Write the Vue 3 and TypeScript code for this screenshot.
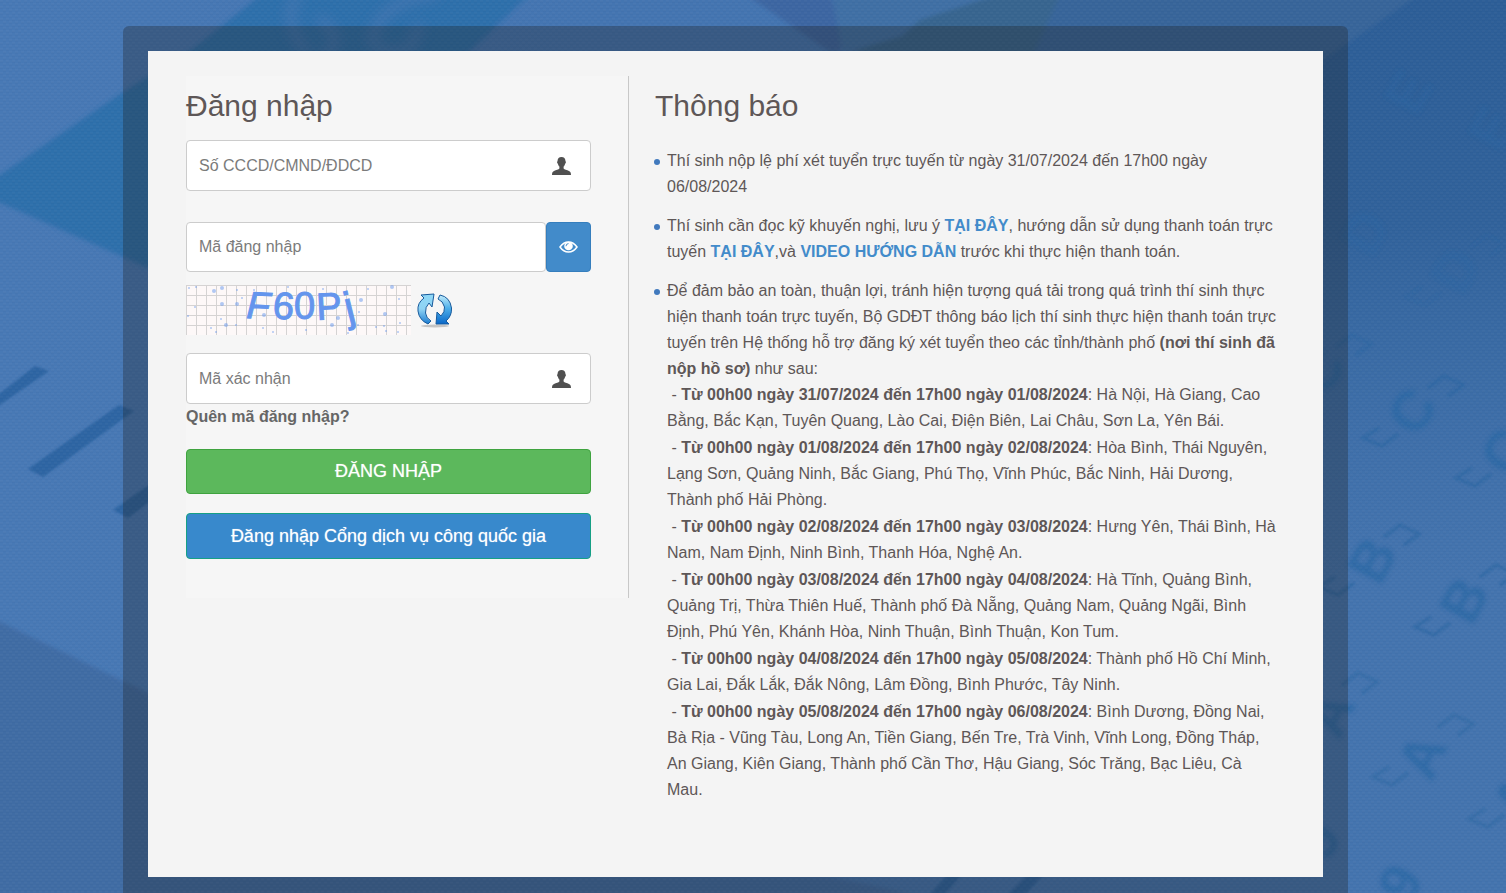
<script setup lang="ts">
import { ref } from 'vue'

interface Slot {
  time: string
  places: string
}

const citizenId = ref('')
const loginCode = ref('')
const captcha = ref('')
const showCode = ref(false)

const slots: Slot[] = [
  { time: 'Từ 00h00 ngày 31/07/2024 đến 17h00 ngày 01/08/2024', places: 'Hà Nội, Hà Giang, Cao Bằng, Bắc Kạn, Tuyên Quang, Lào Cai, Điện Biên, Lai Châu, Sơn La, Yên Bái.' },
  { time: 'Từ 00h00 ngày 01/08/2024 đến 17h00 ngày 02/08/2024', places: 'Hòa Bình, Thái Nguyên, Lạng Sơn, Quảng Ninh, Bắc Giang, Phú Thọ, Vĩnh Phúc, Bắc Ninh, Hải Dương, Thành phố Hải Phòng.' },
  { time: 'Từ 00h00 ngày 02/08/2024 đến 17h00 ngày 03/08/2024', places: 'Hưng Yên, Thái Bình, Hà Nam, Nam Định, Ninh Bình, Thanh Hóa, Nghệ An.' },
  { time: 'Từ 00h00 ngày 03/08/2024 đến 17h00 ngày 04/08/2024', places: 'Hà Tĩnh, Quảng Bình, Quảng Trị, Thừa Thiên Huế, Thành phố Đà Nẵng, Quảng Nam, Quảng Ngãi, Bình Định, Phú Yên, Khánh Hòa, Ninh Thuận, Bình Thuận, Kon Tum.' },
  { time: 'Từ 00h00 ngày 04/08/2024 đến 17h00 ngày 05/08/2024', places: 'Thành phố Hồ Chí Minh, Gia Lai, Đắk Lắk, Đắk Nông, Lâm Đồng, Bình Phước, Tây Ninh.' },
  { time: 'Từ 00h00 ngày 05/08/2024 đến 17h00 ngày 06/08/2024', places: 'Bình Dương, Đồng Nai, Bà Rịa - Vũng Tàu, Long An, Tiền Giang, Bến Tre, Trà Vinh, Vĩnh Long, Đồng Tháp, An Giang, Kiên Giang, Thành phố Cần Thơ, Hậu Giang, Sóc Trăng, Bạc Liêu, Cà Mau.' },
]

// Specks scattered over the captcha grid: x, y, radius
const specks: number[][] = [
  [3, 3, 1], [10, 2, 1], [28, 6, 2], [36, 3, 2], [51, 5, 1], [9, 22, 1], [2, 31, 1], [36, 19, 2],
  [51, 19, 2], [35, 34, 1], [25, 43, 1], [40, 40, 2], [30, 47, 1], [50, 40, 1], [56, 13, 1], [68, 5, 1],
  [87, 47, 1], [78, 30, 2], [120, 45, 1], [137, 4, 1], [146, 40, 2], [152, 33, 2], [175, 15, 2],
  [182, 4, 1], [173, 27, 1], [172, 40, 1], [190, 42, 1], [199, 29, 2], [200, 46, 1], [206, 2, 2],
  [213, 14, 1], [214, 38, 1], [198, 41, 1], [162, 48, 1], [212, 47, 1], [102, 2, 1], [77, 43, 1],
]

// Ghost bracket pairs printed on the background: centre x, centre y, strength
const brackets: number[][] = [
  [1412, 411, 0.8], [1505, 451, 0.8], [1368, 560, 0.8], [1464, 600, 0.8], [1422, 750, 0.6],
  [1326, 708, 0.6], [1518, 792, 0.6], [1455, 270, 0.35], [1320, 370, 0.7],
]
</script>

<template>
  <div class="page">
    <svg class="backdrop" viewBox="0 0 1506 893" preserveAspectRatio="xMidYMid slice" aria-hidden="true">
      <defs>
        <linearGradient id="base" x1="0" y1="0" x2="1" y2="0">
          <stop offset="0" stop-color="#4879b5" />
          <stop offset="0.4" stop-color="#4475b1" />
          <stop offset="1" stop-color="#4474ae" />
        </linearGradient>
        <linearGradient id="shade" x1="0" y1="0" x2="0" y2="1">
          <stop offset="0" stop-color="#2d5e97" />
          <stop offset="0.25" stop-color="#2f6099" stop-opacity="0.9" />
          <stop offset="0.65" stop-color="#3a6ba5" stop-opacity="0" />
        </linearGradient>
        <pattern id="weave" width="6" height="6" patternUnits="userSpaceOnUse">
          <path d="M0 1h3M3 4h3" stroke="#fff" stroke-opacity="0.05" />
          <path d="M0 2h3M3 5h3" stroke="#00183a" stroke-opacity="0.05" />
        </pattern>
        <filter id="crisp"><feGaussianBlur stdDeviation="1.200" /></filter>
        <filter id="soft"><feGaussianBlur stdDeviation="2" /></filter>
        <filter id="softer" x="-20%" y="-50%" width="140%" height="200%"><feGaussianBlur stdDeviation="6" /></filter>
      </defs>
      <rect width="1506" height="893" fill="url(#base)" />
      <path d="M1100 0H1506V893H1100Z" fill="url(#shade)" />
      <g filter="url(#soft)">
        <path d="M-6 179L123 92L190 51L262 -6H530L470 51L148 268L-6 200Z" fill="#2f6fab" />
        <path d="M-6 620L0 622L123 681L300 765L940 900H-6Z" fill="#416ca4" />
      </g>
      <g filter="url(#crisp)" fill="#2f65a3">
        <path d="M-6 398L35 366L49 371L-6 409Z" />
        <path d="M28 469L119 405L134 411L43 477Z" />
        <path d="M113 510L170 470L184 476L128 518Z" />
        <path d="M925 900L950 872H964L940 900Z" />
        <path d="M1003 900L1030 872H1046L1020 900Z" />
      </g>
      <g filter="url(#softer)" fill="none" stroke="#4677b2" stroke-width="11" opacity="0.7">
        <path d="M298 -6Q280 20 308 55M318 18Q350 40 320 60" />
        <path d="M438 -6Q380 0 372 40Q380 58 410 50L420 24" />
      </g>
      <g filter="url(#soft)">
        <path d="M745 -6L830 52H840L842 30L830 -6Z" fill="#3c66a2" />
        <path d="M832 -6L842 52H930L1000 -6Z" fill="#4170a5" />
        <path d="M850 52L902 36L920 20L1000 -6H1075L1045 60Z" fill="#38658f" />
        <path d="M1060 -6H1420L1320 62H1030Z" fill="#38659a" />
      </g>
      <g class="ghost" filter="url(#soft)">
        <text x="1412" y="411" transform="rotate(-55 1412 411)">C</text>
        <text x="1505" y="451" transform="rotate(-55 1505 451)">C</text>
        <text x="1320" y="370" transform="rotate(-55 1320 370)">C</text>
        <text x="1372" y="560" transform="rotate(-62 1372 560)">B</text>
        <text x="1464" y="600" transform="rotate(-62 1464 600)">B</text>
        <text x="1422" y="756" transform="rotate(-65 1422 756)">A</text>
        <text x="1330" y="714" transform="rotate(-65 1330 714)">A</text>
        <text x="1516" y="796" transform="rotate(-65 1516 796)">A</text>
        <text x="1400" y="883" transform="rotate(-62 1400 883)">9</text>
        <text x="1318" y="840" transform="rotate(-62 1318 840)">9</text>
        <text class="faint" x="1455" y="270" transform="rotate(-62 1455 270)">D</text>
        <text class="faint" x="1365" y="232" transform="rotate(-62 1365 232)">D</text>
        <text class="faint" x="1408" y="92" transform="rotate(-62 1408 92)">E</text>
        <text class="faint" x="1492" y="128" transform="rotate(-62 1492 128)">E</text>
      </g>
      <g filter="url(#crisp)" fill="none" stroke="#2c67a2" stroke-width="3" opacity="0.8">
        <path
          v-for="(b, i) in brackets"
          :key="i"
          :opacity="b[2]"
          :transform="`translate(${b[0]} ${b[1]})`"
          d="M-33 17L-49 27L-30 35L-14 23M16 -23L32 -35L51 -26L36 -15"
        />
      </g>
      <rect width="1506" height="893" fill="url(#weave)" />
    </svg>

    <main class="frame">
      <div class="panel">
        <form class="login" @submit.prevent>
          <h2>Đăng nhập</h2>
          <div class="field">
            <input v-model="citizenId" type="text" placeholder="Số CCCD/CMND/ĐDCD" aria-label="Số CCCD/CMND/ĐDCD" />
            <svg class="user" viewBox="0 0 19 18" aria-hidden="true">
              <path d="M9.500 0C12 0 13.500 1.500 13.500 4.200C14.300 4.500 13.900 6.300 13.100 6.700C12.800 8.200 12.200 9 11.600 9.600V11.600C12.300 12.800 15 13 17 13.900C18.700 14.700 19 16 19 18H0C0 16 .3 14.700 2 13.900C4 13 6.700 12.800 7.400 11.600V9.600C6.800 9 6.200 8.200 5.900 6.700C5.100 6.300 4.700 4.500 5.500 4.200C5.500 1.500 7 0 9.500 0Z" />
            </svg>
          </div>
          <div class="code-row">
            <input v-model="loginCode" :type="showCode ? 'text' : 'password'" placeholder="Mã đăng nhập" aria-label="Mã đăng nhập" />
            <button class="eye" type="button" aria-label="Hiện mã đăng nhập" @click="showCode = !showCode">
              <svg viewBox="0 0 19 12" aria-hidden="true">
                <path d="M1 6Q4.500 1 9.500 1T18 6Q14.500 11 9.500 11T1 6Z" fill="none" stroke="#fff" stroke-width="1.500" />
                <circle cx="9.500" cy="5" r="4.300" fill="#fff" />
                <path d="M7 5.200A2.600 2.600 0 0 1 9.500 2.600" fill="none" stroke="#428bca" stroke-width="1" />
              </svg>
            </button>
          </div>
          <div class="captcha-row">
            <svg class="captcha" viewBox="0 0 225 50" role="img" aria-label="Mã xác nhận F60Pj">
              <defs>
                <pattern id="grid" width="10" height="10" patternUnits="userSpaceOnUse">
                  <path d="M0 0.500H10M0.500 0V10" stroke="#d5d3d3" fill="none" />
                </pattern>
              </defs>
              <rect width="225" height="50" fill="#fdf8f8" />
              <rect width="225" height="50" fill="url(#grid)" />
              <circle v-for="(s, i) in specks" :key="i" :cx="s[0]" :cy="s[1]" :r="s[2]" fill="#6495ed" :opacity="s[2] > 1 ? 0.5 : 0.5" />
              <g class="glyphs">
                <text class="slant" x="60" y="33" transform="rotate(3 60 33)">F</text>
                <text x="86" y="33" transform="rotate(5 86 33)">6</text>
                <text x="108" y="34">0</text>
                <text x="131" y="35" transform="rotate(-3 131 35)">P</text>
                <text class="tall" x="162" y="37" transform="rotate(-14 162 37)">j</text>
              </g>
            </svg>
            <button class="refresh" type="button" aria-label="Đổi mã xác nhận">
              <svg viewBox="0 0 36 36" aria-hidden="true">
                <defs>
                  <linearGradient id="sky" x1="0" y1="0" x2="0" y2="1">
                    <stop offset="0" stop-color="#8fd8f7" />
                    <stop offset="0.5" stop-color="#8fd3f4" />
                    <stop offset="1" stop-color="#1b7bd0" />
                  </linearGradient>
                  <linearGradient id="deep" x1="0" y1="0" x2="0" y2="1">
                    <stop offset="0" stop-color="#c5edfb" />
                    <stop offset="0.45" stop-color="#4fb0ea" />
                    <stop offset="1" stop-color="#0967c8" />
                  </linearGradient>
                </defs>
                <ellipse cx="18" cy="34" rx="14" ry="1.500" fill="#000" opacity="0.2" />
                <path d="M4 3L17 2L15 15L12 11Q8 15 8.500 21Q9 26 14 29L11 32Q2 28 1 19Q0 11 7 6Z" fill="url(#sky)" stroke="#175a9c" stroke-linejoin="round" />
                <path d="M32 32H19L20 20L24 24Q28 20 27.500 15Q26 9 21 7L23 3Q33 5 34.500 16Q35 24 29 29Z" fill="url(#deep)" stroke="#175a9c" stroke-linejoin="round" />
              </svg>
            </button>
          </div>
          <div class="field">
            <input v-model="captcha" type="text" placeholder="Mã xác nhận" aria-label="Mã xác nhận" />
            <svg class="user" viewBox="0 0 19 18" aria-hidden="true">
              <path d="M9.500 0C12 0 13.500 1.500 13.500 4.200C14.300 4.500 13.900 6.300 13.100 6.700C12.800 8.200 12.200 9 11.600 9.600V11.600C12.300 12.800 15 13 17 13.900C18.700 14.700 19 16 19 18H0C0 16 .3 14.700 2 13.900C4 13 6.700 12.800 7.400 11.600V9.600C6.800 9 6.200 8.200 5.900 6.700C5.100 6.300 4.700 4.500 5.500 4.200C5.500 1.500 7 0 9.500 0Z" />
            </svg>
          </div>
          <a class="forgot" href="#">Quên mã đăng nhập?</a>
          <button class="submit" type="submit">ĐĂNG NHẬP</button>
          <button class="portal" type="button">Đăng nhập Cổng dịch vụ công quốc gia</button>
        </form>

        <section class="notice">
          <h2>Thông báo</h2>
          <ul>
            <li>Thí sinh nộp lệ phí xét tuyển trực tuyến từ ngày 31/07/2024 đến 17h00 ngày 06/08/2024</li>
            <li>
              Thí sinh cần đọc kỹ khuyến nghị, lưu ý&nbsp;<a href="#">TẠI ĐÂY</a>, hướng dẫn sử dụng thanh toán trực
              tuyến&nbsp;<a href="#">TẠI ĐÂY</a>,và <a href="#">VIDEO HƯỚNG DẪN</a> trước khi thực hiện thanh toán.
            </li>
            <li>
              Để đảm bảo an toàn, thuận lợi, tránh hiện tượng quá tải trong quá trình thí sinh thực hiện thanh toán
              trực tuyến, Bộ GDĐT thông báo lịch thí sinh thực hiện thanh toán trực tuyến trên Hệ thống hỗ trợ đăng ký
              xét tuyển theo các tỉnh/thành phố <b>(nơi thí sinh đã nộp hồ sơ)</b> như sau:
              <div v-for="slot in slots" :key="slot.time" class="slot">&nbsp;- <b>{{ slot.time }}</b>: {{ slot.places }}</div>
            </li>
          </ul>
        </section>
      </div>
    </main>
  </div>
</template>

<style>
body {
  margin: 0;
  background: #4474ae;
}
</style>

<style scoped>
* {
  box-sizing: border-box;
}

.page {
  min-height: 100vh;
  padding: 26px 158px 0 123px;
  font-family: "Liberation Sans", Arial, sans-serif;
  font-size: 16px;
  color: #5e5757;
}

.backdrop {
  position: fixed;
  inset: 0;
  z-index: -1;
  width: 100%;
  height: 100%;
}

.ghost {
  fill: #2a67a4;
  opacity: 0.75;
  font-size: 56px;
  font-weight: bold;
  text-anchor: middle;
  dominant-baseline: central;
}

.faint {
  opacity: 0.5;
}

.frame {
  padding: 25px;
  border-radius: 6px;
  background: rgba(30, 30, 30, 0.3);
}

.panel {
  display: grid;
  grid-template-columns: 443fr 657fr;
  align-items: start;
  padding: 25px 37px 74px 38px;
  background: #f4f4f4;
}

h2 {
  margin: 0;
  font-size: 30px;
  font-weight: normal;
  line-height: 60px;
}

.login {
  display: flex;
  flex-direction: column;
  padding: 0 37px 39px 0;
  border-right: 1px solid #c8c8c8;
  background: #f6f6f6;
}

.login h2 {
  padding-bottom: 4px;
}

.field {
  display: flex;
  position: relative;
}

input {
  flex: 1;
  min-width: 0;
  height: 51px;
  padding: 0 12px;
  border: 1px solid #ccc;
  border-radius: 4px;
  background: #fff;
  color: #555;
  font-family: inherit;
  font-size: 16px;
}

input::placeholder {
  color: #7b7b7b;
  opacity: 1;
}

.user {
  position: absolute;
  top: 17px;
  right: 20px;
  width: 19px;
  height: 18px;
  fill: #505050;
}

.code-row {
  display: flex;
  margin-top: 31px;
}

.code-row input {
  height: 50px;
}

button {
  border: 1px solid;
  border-radius: 4px;
  color: #fff;
  font-family: inherit;
  font-size: 18px;
  text-shadow: 0 0 1px rgba(255, 255, 255, 0.6);
  cursor: pointer;
}

.eye {
  display: flex;
  align-items: center;
  justify-content: center;
  width: 45px;
  padding: 0;
  border-color: #357ebd;
  background: #428bca;
}

.eye svg {
  width: 19px;
  height: 12px;
}

.captcha-row {
  display: flex;
  align-items: center;
  gap: 6px;
  margin: 13px 0 18px;
}

.captcha {
  width: 225px;
  height: 50px;
}

.glyphs {
  fill: #6495ed;
  stroke: #6495ed;
  font-size: 38px;
}

.slant {
  font-style: italic;
}

.tall {
  font-size: 42px;
}

.refresh {
  width: 36px;
  height: 36px;
  padding: 0;
  border: 0;
  background: none;
}

.refresh svg {
  display: block;
}

.forgot {
  align-self: flex-start;
  color: #666;
  font-weight: bold;
  line-height: 26px;
  text-decoration: none;
}

.submit {
  height: 45px;
  margin-top: 19px;
  border-color: #3fa33f;
  background: #5cb85c;
}

.portal {
  height: 46px;
  margin-top: 19px;
  border-color: #16a085;
  background: #3889cc;
}

.notice {
  padding-left: 26px;
}

ul {
  display: grid;
  gap: 13px;
  margin: 12px 0 0;
  padding: 0;
  list-style: none;
}

li {
  position: relative;
  padding: 0 6px 0 12px;
  line-height: 26px;
}

li::before {
  content: "";
  position: absolute;
  top: 11px;
  left: -1px;
  width: 6px;
  height: 6px;
  border-radius: 50%;
  background: #4179bd;
}

li a {
  color: #428bca;
  font-weight: bold;
  text-decoration: none;
}

.slot + .slot {
  margin-top: 1px;
}
</style>
